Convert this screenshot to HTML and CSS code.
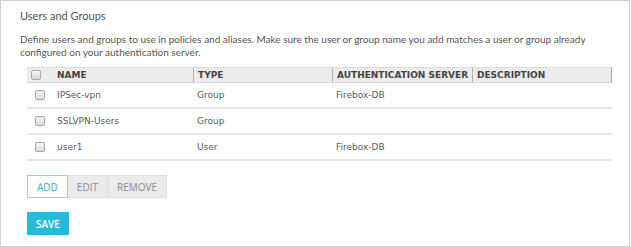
FILE: index.html
```html
<!DOCTYPE html>
<html>
	<head>
		<meta charset="utf-8" />
		<title>Users and Groups</title>
		<link rel="stylesheet" href="styles.css">
	</head>
	<body>
		<div class="panel">
			<h2 class="panel-title">Users and Groups</h2>
			<p class="panel-desc">Define users and groups to use in policies and aliases. Make sure the user or group name you add matches a user or group already configured on your authentication server.</p>

			<div class="grid">
				<div class="grid-row grid-head">
					<div class="cell cell-check"><span class="check check-head"></span></div>
					<div class="cell">NAME</div>
					<div class="cell sep">TYPE</div>
					<div class="cell sep">AUTHENTICATION SERVER</div>
					<div class="cell sep">DESCRIPTION</div>
				</div>
				<div class="grid-row">
					<div class="cell cell-check"><span class="check"></span></div>
					<div class="cell">IPSec-vpn</div>
					<div class="cell">Group</div>
					<div class="cell">Firebox-DB</div>
					<div class="cell"></div>
				</div>
				<div class="grid-row">
					<div class="cell cell-check"><span class="check"></span></div>
					<div class="cell">SSLVPN-Users</div>
					<div class="cell">Group</div>
					<div class="cell"></div>
					<div class="cell"></div>
				</div>
				<div class="grid-row">
					<div class="cell cell-check"><span class="check"></span></div>
					<div class="cell">user1</div>
					<div class="cell">User</div>
					<div class="cell">Firebox-DB</div>
					<div class="cell"></div>
				</div>
			</div>

			<div class="btn-group">
				<button class="btn btn-active">ADD</button>
				<button class="btn">EDIT</button>
				<button class="btn">REMOVE</button>
			</div>

			<button class="save-btn">SAVE</button>
		</div>
	</body>
</html>
```

FILE: styles.css
```css
body {
	margin: 0;
	background: white;
	font-family: Lato, "Open Sans", sans-serif;
}
.panel {
	width: 630px;
	height: 247px;
	box-sizing: border-box;
	border: 1px solid #cfcfcf;
	padding: 8px 19px 0;
}
.panel-title {
	margin: 0;
	font-size: 11px;
	line-height: 14px;
	font-weight: normal;
	color: #555;
}
.panel-desc {
	margin: 10px 0 0;
	font-size: 10px;
	line-height: 13px;
	color: #555;
}
.grid {
	margin: 8px 0 0 7px;
	width: 585px;
	font-family: "DejaVu Sans", Verdana, sans-serif;
	font-size: 9px;
	color: #5a5a5a;
}
.grid-row {
	display: grid;
	grid-template-columns: 26px 140px 139px 140px 1fr;
	height: 24px;
	align-items: center;
	border-bottom: 2px solid #e6e6e6;
}
.grid-head {
	height: 14px;
	background: #ececec;
	border-top: 1px solid #dcdcdc;
	border-bottom: 1px solid #d6d6d6;
	border-right: 1px solid #a9a9a9;
	font-weight: bold;
	color: #444;
}
.cell {
	padding-left: 4px;
	white-space: nowrap;
}
.grid-head .cell {
	height: 14px;
	line-height: 14px;
}
.sep {
	border-left: 1px solid #b3b3b3;
}
.cell-check {
	padding-left: 8px;
	display: flex;
	align-items: center;
}
.check {
	display: block;
	width: 8px;
	height: 8px;
	border: 1px solid #a8a8a8;
	border-radius: 2px;
	background: linear-gradient(#f4f4f4, #dcdcdc);
}
.grid-head .check-head {
	margin-left: -4px;
}
.btn-group {
	display: flex;
	margin: 14px 0 0 7px;
}
.btn {
	font-family: "Open Sans", sans-serif;
	font-size: 10px;
	height: 23px;
	padding: 0 9px;
	background: #ebebeb;
	border: 1px solid #dcdcdc;
	color: #8a8a8a;
	margin-left: -1px;
}
.btn-active {
	background: white;
	border-color: #9ad3e0;
	color: #3ea9c9;
	margin-left: 0;
	position: relative;
}
.save-btn {
	display: block;
	margin: 14px 0 0 7px;
	height: 23px;
	padding: 0 9px;
	font-family: "Open Sans", sans-serif;
	font-size: 10px;
	font-weight: 600;
	color: white;
	background: #29bad8;
	border: none;
}
```
